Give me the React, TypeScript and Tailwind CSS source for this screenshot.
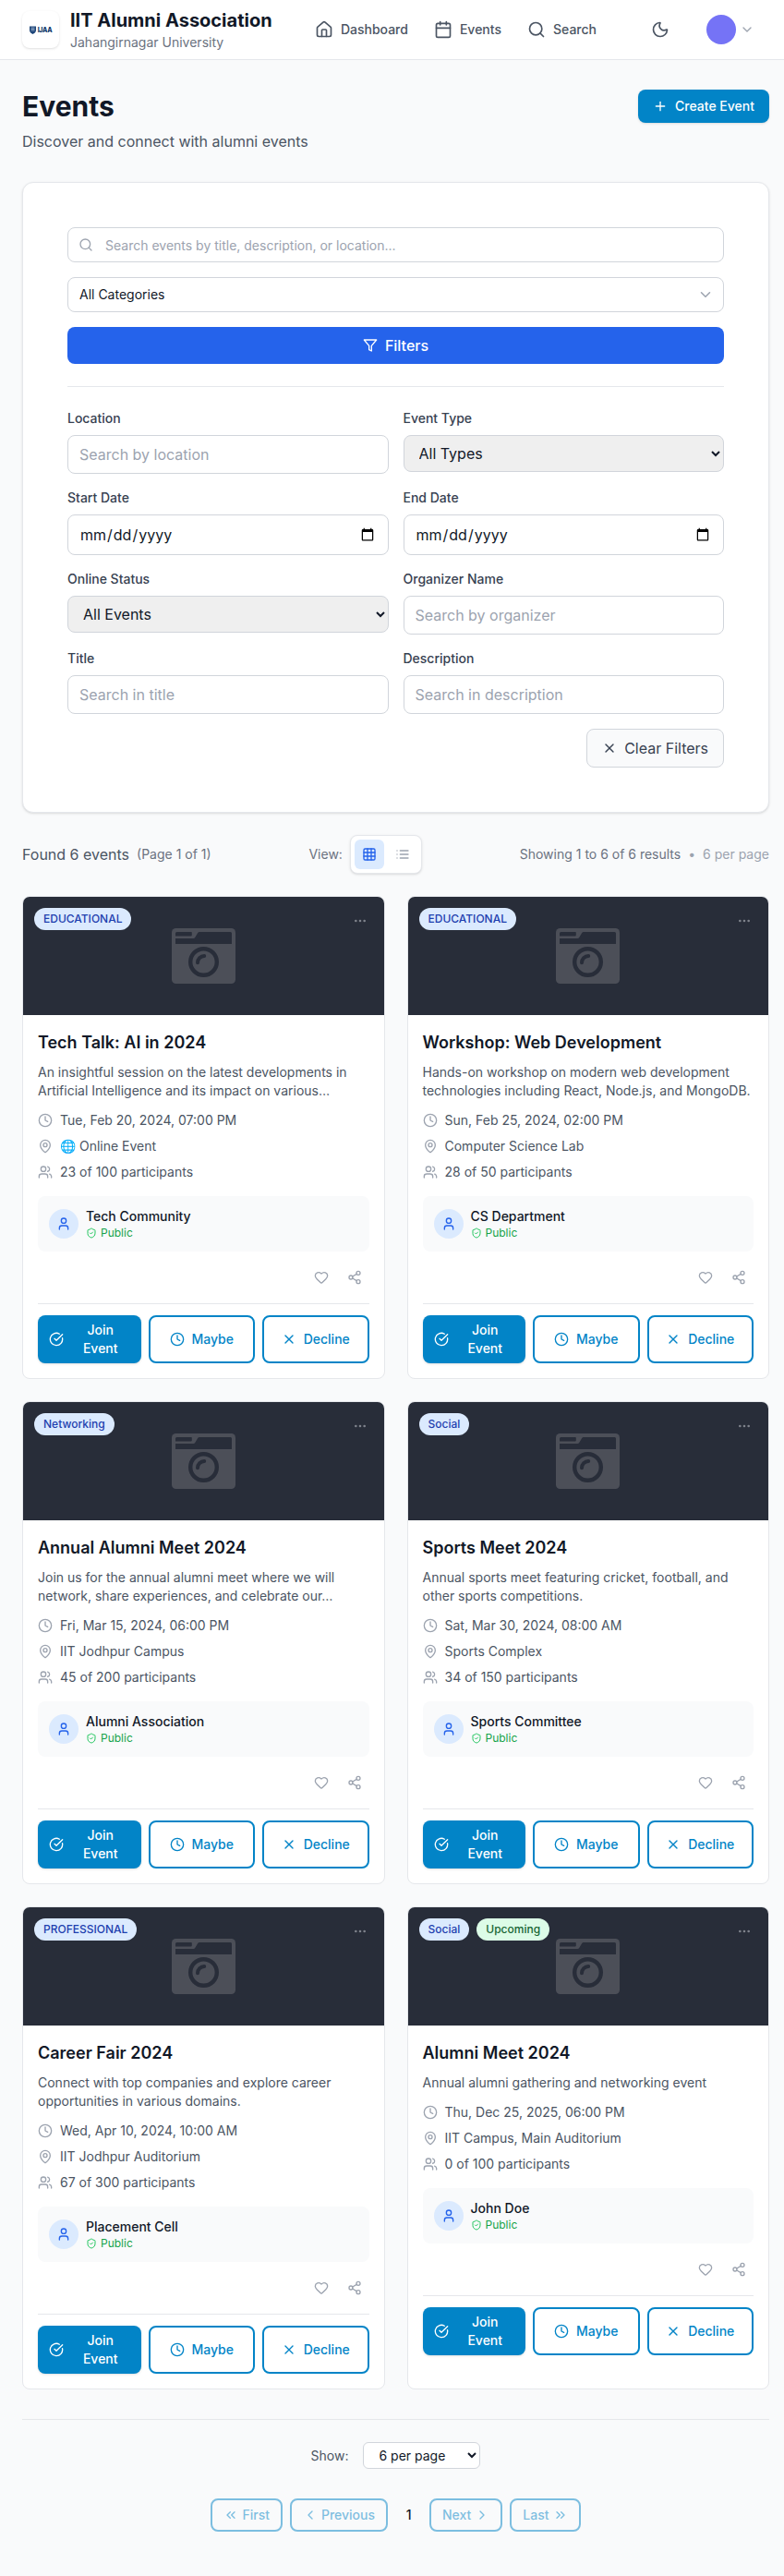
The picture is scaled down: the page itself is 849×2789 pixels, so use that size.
import type { ReactNode } from "react";
import {
  Calendar,
  ChevronDown,
  ChevronLeft,
  ChevronRight,
  ChevronsLeft,
  ChevronsRight,
  CircleCheckBig,
  Clock,
  Ellipsis,
  Grid3x3,
  Heart,
  House,
  MapPin,
  Moon,
  Plus,
  Search,
  Share2,
  ShieldCheck,
  User,
  Users,
  X,
} from "lucide-react";

type EventItem = {
  category: string;
  upcoming?: boolean;
  title: string;
  description: string;
  date: string;
  place: string;
  participants: string;
  organizer: string;
};

const events: EventItem[] = [
  {
    category: "EDUCATIONAL",
    title: "Tech Talk: AI in 2024",
    description:
      "An insightful session on the latest developments in Artificial Intelligence and its impact on various…",
    date: "Tue, Feb 20, 2024, 07:00 PM",
    place: "🌐 Online Event",
    participants: "23 of 100 participants",
    organizer: "Tech Community",
  },
  {
    category: "EDUCATIONAL",
    title: "Workshop: Web Development",
    description:
      "Hands-on workshop on modern web development technologies including React, Node.js, and MongoDB.",
    date: "Sun, Feb 25, 2024, 02:00 PM",
    place: "Computer Science Lab",
    participants: "28 of 50 participants",
    organizer: "CS Department",
  },
  {
    category: "Networking",
    title: "Annual Alumni Meet 2024",
    description:
      "Join us for the annual alumni meet where we will network, share experiences, and celebrate our…",
    date: "Fri, Mar 15, 2024, 06:00 PM",
    place: "IIT Jodhpur Campus",
    participants: "45 of 200 participants",
    organizer: "Alumni Association",
  },
  {
    category: "Social",
    title: "Sports Meet 2024",
    description:
      "Annual sports meet featuring cricket, football, and other sports competitions.",
    date: "Sat, Mar 30, 2024, 08:00 AM",
    place: "Sports Complex",
    participants: "34 of 150 participants",
    organizer: "Sports Committee",
  },
  {
    category: "PROFESSIONAL",
    title: "Career Fair 2024",
    description:
      "Connect with top companies and explore career opportunities in various domains.",
    date: "Wed, Apr 10, 2024, 10:00 AM",
    place: "IIT Jodhpur Auditorium",
    participants: "67 of 300 participants",
    organizer: "Placement Cell",
  },
  {
    category: "Social",
    upcoming: true,
    title: "Alumni Meet 2024",
    description: "Annual alumni gathering and networking event",
    date: "Thu, Dec 25, 2025, 06:00 PM",
    place: "IIT Campus, Main Auditorium",
    participants: "0 of 100 participants",
    organizer: "John Doe",
  },
];

function Logo() {
  return (
    <div className="flex h-10 w-10 items-center justify-center rounded-lg bg-white shadow-sm">
      <svg width="7" height="9" viewBox="0 0 14 18">
        <path d="M0 1h14v9c0 4-4 6-7 8-3-2-7-4-7-8z" fill="#1c4478" />
        <path d="M3 4h8M3 7h8M3 10h8" stroke="#c9d6e6" strokeWidth="1.3" />
      </svg>
      <span className="ml-0.5 text-[7px] leading-none font-extrabold tracking-[-0.3px] text-[#143a6c]">
        IJAA
      </span>
    </div>
  );
}

function ListIcon() {
  return (
    <svg
      width="16"
      height="16"
      viewBox="0 0 24 24"
      fill="none"
      stroke="currentColor"
      strokeWidth="2"
      strokeLinecap="round"
    >
      <path d="M8 6h13M8 12h13M8 18h13M3 6h.01M3 12h.01M3 18h.01" />
    </svg>
  );
}

function Header() {
  return (
    <header className="flex h-[65px] items-center border-b border-[#e5e7eb] bg-white pr-8 pl-6">
      <Logo />
      <div className="ml-3">
        <div className="text-xl leading-7 font-bold text-[#111827]">IIT Alumni Association</div>
        <div className="text-sm leading-5 text-[#6b7280]">Jahangirnagar University</div>
      </div>
      <nav className="ml-auto flex items-center gap-7 text-sm font-medium text-[#4b5563]">
        <a className="flex items-center gap-2">
          <House size={20} />
          Dashboard
        </a>
        <a className="flex items-center gap-2">
          <Calendar size={20} />
          Events
        </a>
        <a className="flex items-center gap-2">
          <Search size={20} />
          Search
        </a>
      </nav>
      <Moon size={20} className="ml-[59px] text-[#4b5563]" />
      <div className="ml-10 h-8 w-8 rounded-full bg-[#7573f6]" />
      <ChevronDown size={16} className="ml-1 text-[#9ca3af]" />
    </header>
  );
}

function Field({ label, children }: { label: string; children: ReactNode }) {
  return (
    <div>
      <label className="mb-2 block text-sm font-medium text-[#374151]">{label}</label>
      {children}
    </div>
  );
}

function TextInput({ placeholder }: { placeholder: string }) {
  return (
    <input
      placeholder={placeholder}
      className="block h-[42px] w-full rounded-lg border border-[#d1d5db] bg-white px-3 text-base text-[#111827] placeholder:text-[#9ca3af]"
    />
  );
}

function DateInput() {
  return (
    <input
      type="date"
      className="block h-11 w-full rounded-lg border border-[#d1d5db] bg-white px-3 py-2 text-base text-[#111827]"
    />
  );
}

function SelectInput({ value }: { value: string }) {
  return (
    <select className="block h-10 w-full rounded-lg border border-[#d1d5db] bg-[#efefef] px-3 text-base text-[#111827]">
      <option>{value}</option>
    </select>
  );
}

function FilterPanel() {
  return (
    <section className="rounded-xl border border-[#e5e7eb] bg-white p-12 shadow-sm">
      <div className="flex flex-col gap-4">
        <div className="relative">
          <Search size={16} className="absolute top-[11px] left-3 text-[#9ca3af]" />
          <input
            placeholder="Search events by title, description, or location..."
            className="block h-[38px] w-full rounded-lg border border-[#d1d5db] bg-white pr-3 pl-10 text-sm placeholder:text-[#9ca3af]"
          />
        </div>
        <button className="flex h-[38px] items-center justify-between rounded-lg border border-[#d1d5db] bg-white pr-2.5 pl-3 text-sm text-[#111827]">
          All Categories
          <ChevronDown size={18} className="text-[#9ca3af]" />
        </button>
        <button className="flex h-10 items-center justify-center gap-2 rounded-lg bg-[#2563eb] text-base font-medium text-white">
          <svg
            width="16"
            height="16"
            viewBox="0 0 24 24"
            fill="none"
            stroke="currentColor"
            strokeWidth="2"
            strokeLinecap="round"
            strokeLinejoin="round"
          >
            <polygon points="22 3 2 3 10 12.46 10 19 14 21 14 12.46 22 3" />
          </svg>
          Filters
        </button>
      </div>
      <div className="mt-6 border-t border-[#e5e7eb] pt-6">
        <div className="grid grid-cols-2 gap-4">
          <Field label="Location">
            <TextInput placeholder="Search by location" />
          </Field>
          <Field label="Event Type">
            <SelectInput value="All Types" />
          </Field>
          <Field label="Start Date">
            <DateInput />
          </Field>
          <Field label="End Date">
            <DateInput />
          </Field>
          <Field label="Online Status">
            <SelectInput value="All Events" />
          </Field>
          <Field label="Organizer Name">
            <TextInput placeholder="Search by organizer" />
          </Field>
          <Field label="Title">
            <TextInput placeholder="Search in title" />
          </Field>
          <Field label="Description">
            <TextInput placeholder="Search in description" />
          </Field>
        </div>
        <div className="mt-4 flex justify-end">
          <button className="flex h-[42px] items-center gap-2 rounded-lg border border-[#d1d5db] bg-[#f9fafb] px-4 text-base text-[#374151]">
            <X size={16} />
            Clear Filters
          </button>
        </div>
      </div>
    </section>
  );
}

function ResultsBar() {
  return (
    <div className="mt-6 flex h-[42px] items-center justify-between">
      <div className="flex items-center text-base text-[#4b5563]">
        Found 6 events
        <span className="ml-2 text-sm text-[#6b7280]">(Page 1 of 1)</span>
      </div>
      <div className="flex items-center gap-2 text-sm text-[#6b7280]">
        View:
        <div className="flex gap-1 rounded-lg border border-[#e5e7eb] bg-white p-1 shadow-sm">
          <div className="flex h-8 w-8 items-center justify-center rounded-md bg-[#dbeafe] text-[#2563eb]">
            <Grid3x3 size={16} />
          </div>
          <div className="flex h-8 w-8 items-center justify-center text-[#9ca3af]">
            <ListIcon />
          </div>
        </div>
      </div>
      <div className="flex items-center gap-2 text-sm text-[#6b7280]">
        <span>Showing 1 to 6 of 6 results</span>
        <span className="text-[#9ca3af]">•</span>
        <span className="text-[#9ca3af]">6 per page</span>
      </div>
    </div>
  );
}

function CameraPlaceholder() {
  return (
    <svg width="69" height="60" viewBox="0 0 69 60">
      <rect width="69" height="60" rx="4.5" fill="#4c4f58" />
      <path d="M5.5 4H21a.8.8 0 0 1 .8.8V7.6a.8.8 0 0 1-.8.8H4V5.5Q4 4 5.5 4z" fill="#282d39" />
      <path d="M4 11H23.5Q24.6 11 25.2 10L28.2 5Q28.8 4 30 4H63.5Q65 4 65 5.5V17H4z" fill="#282d39" />
      <circle cx="34.5" cy="36.5" r="14.3" fill="none" stroke="#282d39" strokeWidth="4.4" />
      <path
        d="M28 37.2a7.2 7.2 0 0 1 7.2-7.2"
        fill="none"
        stroke="#282d39"
        strokeWidth="4"
        strokeLinecap="round"
      />
    </svg>
  );
}

function EventCard({ event }: { event: EventItem }) {
  return (
    <article className="overflow-hidden rounded-lg border border-[#e5e7eb] bg-white">
      <div className="relative flex h-32 items-center justify-center bg-[#282d39]">
        <CameraPlaceholder />
        <div className="absolute top-3 left-3 flex gap-2 text-xs font-medium">
          <span className="rounded-full bg-[#dbeafe] px-2.5 py-1 text-[#1e40af]">
            {event.category}
          </span>
          {event.upcoming && (
            <span className="rounded-full bg-[#dcfce7] px-2.5 py-1 text-[#166534]">Upcoming</span>
          )}
        </div>
        <div className="absolute top-3 right-3 p-1.5 text-[#7e828b]">
          <Ellipsis size={16} />
        </div>
      </div>
      <div className="p-4">
        <h3 className="text-lg leading-7 font-semibold text-[#111827]">{event.title}</h3>
        <p className="mt-2 text-sm text-[#4b5563]">{event.description}</p>
        <ul className="mt-3 flex flex-col gap-2 text-sm text-[#4b5563]">
          <li className="flex items-center gap-2">
            <Clock size={16} className="text-[#9ca3af]" />
            {event.date}
          </li>
          <li className="flex items-center gap-2">
            <MapPin size={16} className="text-[#9ca3af]" />
            {event.place}
          </li>
          <li className="flex items-center gap-2">
            <Users size={16} className="text-[#9ca3af]" />
            {event.participants}
          </li>
        </ul>
        <div className="mt-4 flex items-center gap-2 rounded-lg bg-[#f9fafb] p-3">
          <div className="flex h-8 w-8 items-center justify-center rounded-full bg-[#dbeafe] text-[#2563eb]">
            <User size={16} />
          </div>
          <div>
            <div className="text-sm font-medium text-[#111827]">{event.organizer}</div>
            <div className="flex items-center gap-1 text-xs text-[#16a34a]">
              <ShieldCheck size={12} className="text-[#22c55e]" />
              Public
            </div>
          </div>
        </div>
        <div className="mt-3 flex justify-end gap-1 text-[#9ca3af]">
          <button className="p-2">
            <Heart size={16} />
          </button>
          <button className="p-2">
            <Share2 size={16} />
          </button>
        </div>
        <div className="mt-3 flex gap-2 border-t border-[#e5e7eb] pt-3 text-sm font-medium">
          <button className="flex h-[52px] flex-1 items-center justify-center rounded-lg bg-[#0284c7] px-3 text-white shadow-sm">
            <CircleCheckBig size={16} className="mr-2 shrink-0" />
            <span>Join Event</span>
          </button>
          <button className="flex h-[52px] flex-1 items-center justify-center rounded-lg border-2 border-[#0284c7] px-3 text-[#0284c7]">
            <Clock size={16} className="mr-2" />
            Maybe
          </button>
          <button className="flex h-[52px] flex-1 items-center justify-center rounded-lg border-2 border-[#0284c7] px-3 text-[#0284c7]">
            <X size={16} className="mr-2" />
            Decline
          </button>
        </div>
      </div>
    </article>
  );
}

function PageButton({ children }: { children: ReactNode }) {
  return (
    <button
      disabled
      className="flex h-9 items-center gap-1 rounded-lg border-2 border-[#0284c7] px-3 text-[#0284c7] opacity-50"
    >
      {children}
    </button>
  );
}

function Pagination() {
  return (
    <footer className="mt-8 flex flex-col items-center border-t border-[#e5e7eb] pt-6 pb-12 text-sm">
      <div className="flex items-center gap-4 text-[#4b5563]">
        Show:
        <select className="h-[29px] w-[127px] rounded-md border border-[#d1d5db] bg-white px-3 text-sm text-[#111827]">
          <option>6 per page</option>
        </select>
      </div>
      <div className="mt-8 flex items-center gap-2 font-medium">
        <PageButton>
          <ChevronsLeft size={16} />
          First
        </PageButton>
        <PageButton>
          <ChevronLeft size={16} />
          Previous
        </PageButton>
        <span className="w-[29px] text-center text-[#111827]">1</span>
        <PageButton>
          Next
          <ChevronRight size={16} />
        </PageButton>
        <PageButton>
          Last
          <ChevronsRight size={16} />
        </PageButton>
      </div>
    </footer>
  );
}

export default function App() {
  return (
    <div className="min-h-screen bg-[#f9fafb] font-['Inter',sans-serif]">
      <Header />
      <main className="pt-8 pr-4 pl-6">
        <div className="mb-8 flex items-start justify-between">
          <div>
            <h1 className="text-3xl leading-9 font-bold text-[#111827]">Events</h1>
            <p className="mt-2 text-base text-[#4b5563]">
              Discover and connect with alumni events
            </p>
          </div>
          <button className="flex h-9 items-center gap-2 rounded-lg bg-[#0284c7] px-4 text-sm font-medium text-white shadow-sm">
            <Plus size={16} />
            Create Event
          </button>
        </div>
        <FilterPanel />
        <ResultsBar />
        <div className="mt-6 grid grid-cols-2 gap-6">
          {events.map((event) => (
            <EventCard key={event.title} event={event} />
          ))}
        </div>
        <Pagination />
      </main>
    </div>
  );
}
